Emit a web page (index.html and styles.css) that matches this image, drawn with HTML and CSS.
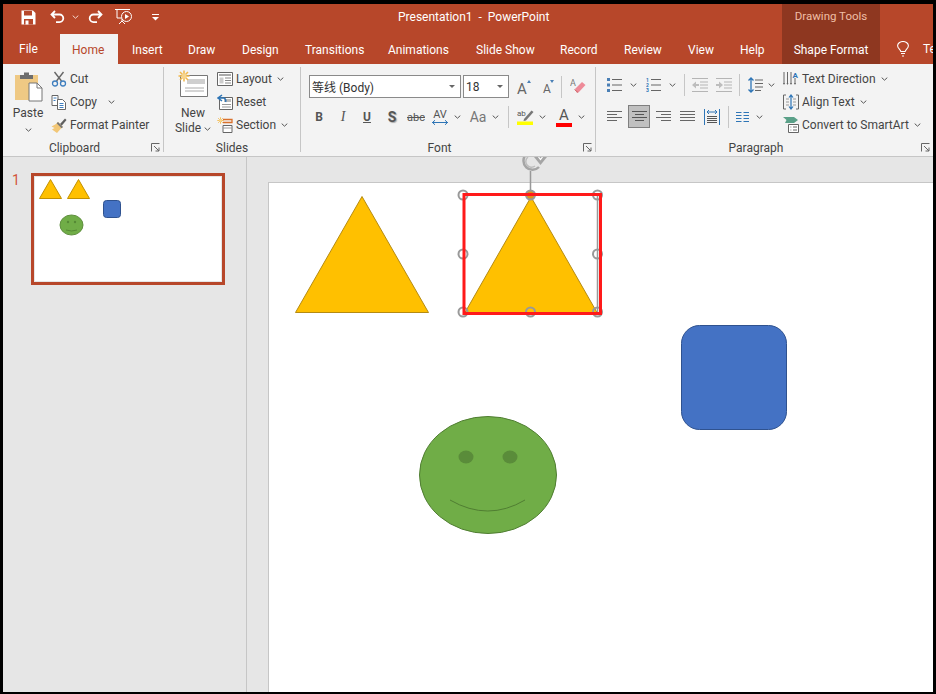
FILE: index.html
```html
<!DOCTYPE html>
<html lang="en">
<head>
  <meta charset="UTF-8">
  <title>Presentation1 - PowerPoint</title>
  <link rel="stylesheet" href="styles.css">
</head>
<body>
  <svg class="defs" aria-hidden="true">
    <symbol id="chev" viewBox="0 0 7 4"><path d="M.7.6 3.5 3.2 6.3.6" fill="none" stroke="#555" stroke-width="1"/></symbol>
    <symbol id="chev-light" viewBox="0 0 7 4"><path d="M.7.6 3.5 3.2 6.3.6" fill="none" stroke="#f5d9cf" stroke-width="1"/></symbol>
    <symbol id="launch" viewBox="0 0 9 9"><path d="M.5 8.5V.5h8M3 3l5 5M8 4.500V8H4.500" fill="none" stroke="#666" stroke-width="1"/></symbol>
    <symbol id="sparkle" viewBox="0 0 12 12"><path d="M6 .5v11M.5 6h11M2 2l8 8M10 2l-8 8" stroke="#f2b84b" stroke-width="1.500"/><circle cx="6" cy="6" r="2.500" fill="#f7d58c"/></symbol>
  </svg>

  <div class="app">
    <header class="head">
      <div class="titlebar">
        <div class="qat">
          <svg class="qat-save" width="15" height="15" viewBox="0 0 15 15"><path d="M.5.500h11.500l2.500 2.500v11.500H.5z" fill="#fff"/><path d="M3 1h8v4.500H3z" fill="#b7472a"/><path d="M3 9h9v5.500H3z" fill="#b7472a"/><path d="M4.500 10.500h3v4h-3z" fill="#fff"/></svg>
          <svg class="qat-undo" width="15" height="14" viewBox="0 0 15 14"><path d="M5 1 1.500 4.500 5 8M2 4.500h7.500a3.800 3.800 0 0 1 0 7.600H6" fill="none" stroke="#fff" stroke-width="1.800"/></svg>
          <svg class="chev qat-chev1"><use href="#chev-light"/></svg>
          <svg class="qat-redo" width="15" height="14" viewBox="0 0 15 14"><path d="M10 1l3.500 3.500L10 8M13 4.500H5.500a3.800 3.800 0 0 0 0 7.600H9" fill="none" stroke="#fff" stroke-width="1.800"/></svg>
          <svg class="qat-show" width="18" height="18" viewBox="0 0 18 18"><path d="M0 1.500h15M2 1.500v8.500h4M7 10v3M4 16l3-3 3 3" fill="none" stroke="#fff"/><circle cx="11.500" cy="8.500" r="5" fill="#b7472a" stroke="#fff"/><path d="M10 6l4 2.500-4 2.500z" fill="#fff"/></svg>
          <svg class="qat-more" width="7" height="7" viewBox="0 0 7 7"><path d="M0 .5h7" stroke="#fff"/><path d="M0 3h7L3.500 6.500z" fill="#fff"/></svg>
        </div>
        <span class="doc-title">Presentation1&nbsp; - &nbsp;PowerPoint</span>
      </div>
      <div class="context-title">Drawing Tools</div>
      <div class="titlebar-end"></div>
      <nav class="tabs">
        <span class="tab tab-file">File</span>
        <span class="tab tab-active">Home</span>
        <span class="tab">Insert</span>
        <span class="tab">Draw</span>
        <span class="tab">Design</span>
        <span class="tab">Transitions</span>
        <span class="tab">Animations</span>
        <span class="tab">Slide Show</span>
        <span class="tab">Record</span>
        <span class="tab">Review</span>
        <span class="tab">View</span>
        <span class="tab">Help</span>
      </nav>
      <div class="context-tab">Shape Format</div>
      <div class="tell">
        <svg width="12" height="16" viewBox="0 0 12 16"><path d="M3.800 10.500C3.500 8.500 .6 7.500.6 4.800a5.400 4.300 0 0 1 10.800 0c0 2.700-2.900 3.700-3.200 5.700zM4 12.500h4M5 15h2" fill="none" stroke="#fff" stroke-width="1.100"/></svg>
        <span>Te</span>
      </div>
    </header>

    <section class="ribbon">
      <div class="group group-clipboard">
        <div class="group-body">
          <div class="big-btn paste-btn">
            <svg width="29" height="30" viewBox="0 0 29 30"><path d="M1 3h23v25H1z" fill="#efc984"/><path d="M6 3h4V.5h5V3h4v4H6z" fill="#6d6d6d"/><path d="M15 11h8l5 5v13H15z" fill="#fff" stroke="#777"/><path d="M23 11v5h5" fill="none" stroke="#777"/></svg>
            <span class="big-label">Paste</span>
            <svg class="chev"><use href="#chev"/></svg>
          </div>
          <div class="small-col">
            <div class="small-btn">
              <svg class="ico" viewBox="0 0 16 16"><path d="M3.500 1l7 9M12.500 1l-7 9" stroke="#666" stroke-width="1.400"/><circle cx="4" cy="12.500" r="2.500" fill="none" stroke="#3f7fbf" stroke-width="1.300"/><circle cx="12" cy="12.500" r="2.500" fill="none" stroke="#3f7fbf" stroke-width="1.300"/></svg>
              <span>Cut</span>
            </div>
            <div class="small-btn">
              <svg class="ico" viewBox="0 0 16 16"><path d="M1 1.500h6v10H1z" fill="#fff" stroke="#666"/><path d="M6.500 5.500h5l3 3v7h-8z" fill="#fff" stroke="#666"/><path d="M2.500 4h3M2.500 6.500h2M8.500 9.500h4M8.500 11.500h4M8.500 13.500h4" stroke="#3f7fbf"/></svg>
              <span>Copy</span>
              <svg class="chev copy-chev"><use href="#chev"/></svg>
            </div>
            <div class="small-btn">
              <svg class="ico" viewBox="0 0 16 16"><path d="M9 7l5-5.500 1.500 1.500L10.500 9z" fill="#5f5f5f"/><path d="M7 5l5 5-2 1.500L6 16 1 12.500 3.500 11 .5 9.500 5 7z" fill="#f2c777"/><path d="M7 5l5 5-1.500 1.200L5.600 6.200z" fill="#777"/></svg>
              <span>Format Painter</span>
            </div>
          </div>
        </div>
        <div class="group-label">Clipboard</div>
        <svg class="launcher"><use href="#launch"/></svg>
      </div>

      <div class="group group-slides">
        <div class="group-body">
          <div class="big-btn new-slide-btn">
            <svg width="30" height="28" viewBox="0 0 30 28"><path d="M2.500 5.500h27v21h-27z" fill="#fff" stroke="#777"/><path d="M9 9h18v5H9z" fill="#cfcfcf"/><path d="M7 18h19M7 21h19" stroke="#aaa"/><use href="#sparkle" width="12" height="12" x="0" y="0"/></svg>
            <span class="big-label new-label">New</span>
            <span class="big-label">Slide <svg class="chev"><use href="#chev"/></svg></span>
          </div>
          <div class="small-col">
            <div class="small-btn">
              <svg class="ico" viewBox="0 0 16 16"><path d="M.5 1.500h15v13H.5z" fill="#fff" stroke="#666"/><path d="M2 3h12v2H2z" fill="#aaa"/><path d="M2.500 6.500h4v6h-4z" fill="#ccc"/><path d="M8 7h6M8 9.500h6M8 12h6" stroke="#888"/></svg>
              <span>Layout</span>
              <svg class="chev"><use href="#chev"/></svg>
            </div>
            <div class="small-btn">
              <svg class="ico" viewBox="0 0 16 16"><path d="M2.500 3.500h13v12h-13z" fill="#fff" stroke="#666"/><path d="M7 5h7v3H7z" fill="#bbb"/><path d="M5 10.500h9M5 13h9" stroke="#999"/><path d="M5 1 1 4l4 3M1.500 4H7a3 3 0 0 1 1.500 4" fill="none" stroke="#2e75b6" stroke-width="1.500"/></svg>
              <span>Reset</span>
            </div>
            <div class="small-btn">
              <svg class="ico" viewBox="0 0 16 16"><use href="#sparkle" width="7" height="7" x="0" y="0"/><path d="M6 2.500h9v3H6" fill="none" stroke="#d9702b" stroke-width="1.300"/><path d="M6 8.500h9v7H6z" fill="#fff" stroke="#666"/><path d="M6 11h9" stroke="#999"/></svg>
              <span>Section</span>
              <svg class="chev"><use href="#chev"/></svg>
            </div>
          </div>
        </div>
        <div class="group-label group-label-full">Slides</div>
      </div>

      <div class="group group-font">
        <div class="group-body font-body">
          <div class="font-row font-row-top">
            <div class="combo combo-font"><span>等线 (Body)</span><i class="combo-arrow"></i></div>
            <div class="combo combo-size"><span>18</span><i class="combo-arrow"></i></div>
            <div class="grow-btn grow-up"><span class="glyph-a glyph-a-big">A</span><i class="tri tri-up"></i></div>
            <div class="grow-btn grow-down"><span class="glyph-a">A</span><i class="tri tri-down"></i></div>
            <i class="sep sep-erase"></i>
            <svg class="eraser" width="16" height="17" viewBox="0 0 16 17"><text x="0" y="8" font-size="9" fill="#777" font-family="Roboto">A</text><path d="M5 11l7-7 3.500 3-7 7.500H6.500z" fill="#ee8a98"/><path d="M4.500 11.500l3.500 3" stroke="#c66"/></svg>
          </div>
          <div class="font-row font-row-bottom">
            <span class="fbtn fb-b">B</span>
            <span class="fbtn fb-i">I</span>
            <span class="fbtn fb-u">U</span>
            <span class="fbtn fb-s">S</span>
            <span class="fbtn fb-abc">abc</span>
            <span class="fbtn fb-av">AV<svg width="16" height="5" viewBox="0 0 16 5"><path d="M0 2.500h16M3 .2.500 2.500 3 4.800M13 .2l2.500 2.300L13 4.800" fill="none" stroke="#2e75b6"/></svg></span>
            <svg class="chev"><use href="#chev"/></svg>
            <span class="fbtn fb-aa">Aa</span>
            <svg class="chev"><use href="#chev"/></svg>
            <i class="sep sep-font"></i>
            <span class="fbtn fb-mark"><svg width="17" height="16" viewBox="0 0 17 16"><text x="0" y="7" font-size="8" fill="#555" font-family="Roboto">ab</text><path d="M7 10 14.500 1.500 16.500 3 9 11.500 6.500 12z" fill="#777"/><path d="M0 12.500h16V16H0z" fill="#ff0"/></svg></span>
            <svg class="chev"><use href="#chev"/></svg>
            <span class="fbtn fb-color">A<i class="color-bar"></i></span>
            <svg class="chev"><use href="#chev"/></svg>
          </div>
        </div>
        <div class="group-label">Font</div>
        <svg class="launcher"><use href="#launch"/></svg>
      </div>

      <div class="group group-para">
        <div class="group-body para-body">
          <div class="para-grid">
            <div class="para-row">
              <svg class="pi pi-list" viewBox="0 0 16 14"><path d="M0 0h3v3H0zM0 5.500h3v3H0zM0 11h3v3H0z" fill="#4a7fb5"/><path d="M5 1.500h10M5 7h10M5 12.500h10" stroke="#666" stroke-width="1.200"/></svg>
              <svg class="chev pc-1"><use href="#chev"/></svg>
              <svg class="pi pi-num" viewBox="0 0 16 14"><text x="0" y="4" font-size="5" font-weight="700" fill="#2e75b6" font-family="Roboto">1</text><text x="0" y="9" font-size="5" font-weight="700" fill="#2e75b6" font-family="Roboto">2</text><text x="0" y="14" font-size="5" font-weight="700" fill="#2e75b6" font-family="Roboto">3</text><path d="M5 1.500h10M5 7h10M5 12.500h10" stroke="#666" stroke-width="1.200"/></svg>
              <svg class="chev pc-2"><use href="#chev"/></svg>
              <i class="sep sep-p1"></i>
              <svg class="pi pi-out" viewBox="0 0 16 14"><path d="M0 .5h16M8 4h8M8 7h8M8 10h8M0 13.500h16" stroke="#b5b5b5"/><path d="M0 7l4-3.500V6h3v2H4v2.500z" fill="#bdbdbd"/></svg>
              <svg class="pi pi-in" viewBox="0 0 16 14"><path d="M0 .5h16M8 4h8M8 7h8M8 10h8M0 13.500h16" stroke="#b5b5b5"/><path d="M7 7 3 3.500V6H0v2h3v2.500z" fill="#bdbdbd"/></svg>
              <i class="sep sep-p2"></i>
              <svg class="pi pi-space" viewBox="0 0 16 16"><path d="M3 1v14M.5 3.500 3 1l2.500 2.500M.5 12.500 3 15l2.500-2.500" fill="none" stroke="#2e75b6" stroke-width="1.300"/><path d="M7 3h8M7 6.500h8M7 10h8M7 13.500h6" stroke="#666" stroke-width="1.100"/></svg>
              <svg class="chev pc-3"><use href="#chev"/></svg>
            </div>
            <div class="para-row para-row-bottom">
              <svg class="pi pi-left" viewBox="0 0 15 11"><path d="M0 .5h15M0 3.500h10M0 6.500h15M0 9.500h10" stroke="#666"/></svg>
              <span class="align-on"><svg class="pi" viewBox="0 0 15 11"><path d="M0 .5h15M3 3.500h9M0 6.500h15M3 9.500h9" stroke="#555"/></svg></span>
              <svg class="pi pi-right" viewBox="0 0 15 11"><path d="M0 .5h15M5 3.500h10M0 6.500h15M5 9.500h10" stroke="#666"/></svg>
              <svg class="pi pi-just" viewBox="0 0 15 11"><path d="M0 .5h15M0 3.500h15M0 6.500h15M0 9.500h15" stroke="#666"/></svg>
              <svg class="pi pi-dist" viewBox="0 0 16 16"><path d="M.5 0v16M15.500 0v16M3 3h10M5 1l-2 2 2 2M11 1l2 2-2 2" fill="none" stroke="#2e75b6"/><path d="M3 7.500h10M3 9.500h10M3 11.500h10M3 13.500h10" stroke="#555"/></svg>
              <i class="sep sep-p3"></i>
              <svg class="pi pi-cols" viewBox="0 0 13 10"><path d="M0 .5h5.500M7.500.5H13M0 3.500h5.500M7.500 3.500H13M0 6.500h5.500M7.500 6.500H13M0 9.500h5.500M7.500 9.500H13" stroke="#2e75b6"/></svg>
              <svg class="chev pc-4"><use href="#chev"/></svg>
            </div>
          </div>
          <div class="small-col para-col">
            <div class="small-btn">
              <svg class="ico" viewBox="0 0 16 16"><path d="M1 1v12M4.500 1v12M8 1v12M12 7v6" stroke="#666"/><path d="M0 12l1 2 1-2zM3.500 12l1 2 1-2zM7 12l1 2 1-2zM11 12l1 2 1-2z" fill="#666"/><text x="9.500" y="6.500" font-size="8" font-weight="700" fill="#2e75b6" font-family="Roboto">A</text></svg>
              <span>Text Direction</span>
              <svg class="chev"><use href="#chev"/></svg>
            </div>
            <div class="small-btn">
              <svg class="ico" viewBox="0 0 16 16"><path d="M3 1H.5v14H3M13 1h2.500v14H13" fill="none" stroke="#666"/><path d="M8 1v14M6 3.500 8 1l2 2.500M6 12.500 8 15l2-2.500" fill="none" stroke="#2e75b6" stroke-width="1.200"/><path d="M3 5h3M10 5h3M3 8h3M10 8h3M3 11h3M10 11h3" stroke="#999"/></svg>
              <span>Align Text</span>
              <svg class="chev"><use href="#chev"/></svg>
            </div>
            <div class="small-btn">
              <svg class="ico" viewBox="0 0 16 16"><path d="M0 0h11l4 3-4 3H2l1.500-3z" fill="#5aa088"/><path d="M5.500 7.500h10v8h-10z" fill="#fff" stroke="#666"/><path d="M7.500 10h.8M7.500 13h.8M10 10h4M10 13h4" stroke="#666"/></svg>
              <span>Convert to SmartArt</span>
              <svg class="chev"><use href="#chev"/></svg>
            </div>
          </div>
        </div>
        <div class="group-label">Paragraph</div>
        <svg class="launcher"><use href="#launch"/></svg>
      </div>
    </section>

    <main class="workspace">
      <aside class="thumbs">
        <span class="thumb-num">1</span>
        <div class="thumb">
          <svg width="188" height="106" viewBox="34 176 188 106">
            <path d="M50.500 179.500 61.500 198.500H39.500zM78.500 179.500 89.500 198.500H67.500z" fill="#ffc000" stroke="#c39100"/>
            <rect x="103.500" y="200.500" width="17" height="17" rx="3" fill="#4472c4" stroke="#2f528f"/>
            <ellipse cx="71.500" cy="225" rx="11.500" ry="10" fill="#70ad47" stroke="#5f8f3e"/>
            <circle cx="68" cy="222" r="1.200" fill="#568a36"/>
            <circle cx="75" cy="222" r="1.200" fill="#568a36"/>
            <path d="M66 230q5.500 2 11 0" fill="none" stroke="#4e7f30" stroke-width=".8"/>
          </svg>
        </div>
      </aside>
      <div class="editor">
        <div class="slide"></div>
        <svg class="canvas" width="686" height="535" viewBox="247 157 686 535">
          <path d="M362 196.500 428.500 312.500H295.500z" fill="#ffc000" stroke="#b58b12"/>
          <path d="M531 197 597 312.500H465z" fill="#ffc000" stroke="#b58b12"/>
          <rect x="681.500" y="325.500" width="105" height="104" rx="18" fill="#4472c4" stroke="#2f528f"/>
          <ellipse cx="488" cy="475" rx="68.500" ry="58.500" fill="#70ad47" stroke="#507e32"/>
          <ellipse cx="466" cy="457" rx="7.500" ry="6.500" fill="#5a8c3a"/>
          <ellipse cx="510" cy="457" rx="7.500" ry="6.500" fill="#5a8c3a"/>
          <path d="M450 500Q488 522 525 500" fill="none" stroke="#507e32"/>
          <g class="sel-frame">
            <path d="M597.500 195V312M530.500 171V191"/>
            <circle cx="463" cy="195" r="4.500"/>
            <circle cx="530.500" cy="195" r="4.500" class="sel-top"/>
            <circle cx="597.500" cy="195" r="4.500"/>
            <circle cx="463" cy="254" r="4.500"/>
            <circle cx="597.500" cy="254" r="4.500"/>
            <circle cx="463" cy="312" r="4.500"/>
            <circle cx="530.500" cy="312" r="4.500"/>
            <circle cx="597.500" cy="312" r="4.500"/>
            <path class="rot-ring" d="M526 154.500A9 9 0 1 0 539 167"/>
            <path class="rot-inner" d="M528 157A5.500 5.500 0 0 0 535 166"/>
            <path class="rot-arrow" d="M534 157h13l-6.500 8z"/>
            <path class="rot-tip" d="M538.500 157l2 2.500 2-2.500"/>
          </g>
          <rect x="464" y="194.500" width="136.500" height="119" fill="none" stroke="#ff1a1a" stroke-width="3"/>
        </svg>
      </div>
    </main>
  </div>
</body>
</html>
```

FILE: styles.css
```css
* {
  box-sizing: border-box;
}
html, body {
  margin: 0;
  height: 100%;
  overflow: hidden;
}
body {
  background: #000;
  font-family: Roboto, "Noto Sans CJK SC", sans-serif;
  font-size: 12px;
  color: #444;
}
.defs {
  display: none;
}
.app {
  width: 930px;
  height: 688px;
  margin: 4px 0 0 3px;
  display: flex;
  flex-direction: column;
  overflow: hidden;
  background: #e6e6e6;
}
svg {
  display: block;
  flex: none;
}
.chev {
  width: 7px;
  height: 4px;
}

/* title bar + tabs */
.head {
  display: grid;
  grid-template-columns: 779px 98px 53px;
  grid-template-rows: 30px 30px;
  background: #b7472a;
  color: #fff;
}
.titlebar {
  display: flex;
  align-items: center;
  padding-bottom: 4px;
}
.qat {
  width: 395px;
  display: flex;
  align-items: center;
  padding-left: 18px;
}
.qat-undo {
  margin-left: 14px;
}
.qat-chev1 {
  margin-left: 7px;
}
.qat-redo {
  margin-left: 9px;
}
.qat-show {
  margin-left: 12px;
}
.qat-more {
  margin-left: 19px;
}
.doc-title {
  white-space: nowrap;
}
.context-title {
  background: #8e3720;
  color: #f0bfa6;
  text-align: center;
  font-size: 11.500px;
  line-height: 24px;
}
.tabs {
  display: grid;
  grid-template-columns: 57px 58px 56px 54px 63px 83px 88px 84px 64px 64px 52px 1fr;
}
.tab {
  padding-left: 14px;
  line-height: 32px;
  white-space: nowrap;
}
.tab-file {
  padding-left: 16px;
  line-height: 30px;
}
.tab-active {
  background: #f3f3f3;
  color: #b7472a;
  padding-left: 12px;
}
.context-tab {
  background: #8e3720;
  text-align: center;
  line-height: 32px;
  white-space: nowrap;
}
.tell {
  display: flex;
  align-items: center;
  gap: 14px;
  padding-left: 17px;
  overflow: hidden;
}

/* ribbon */
.ribbon {
  height: 93px;
  display: flex;
  background: #f3f3f3;
  border-bottom: 1px solid #c6c6c6;
  flex: none;
}
.group {
  position: relative;
  display: flex;
  flex-direction: column;
  margin: 3px 0 4px;
  border-right: 1px solid #c6c6c6;
}
.group-clipboard {
  width: 161px;
}
.group-slides {
  width: 137px;
}
.group-font {
  width: 295px;
}
.group-para {
  width: 337px;
  border-right: none;
}
.group-body {
  flex: 1;
  display: flex;
}
.group-label {
  height: 14px;
  line-height: 20px;
  text-align: center;
  padding-right: 17px;
}
.group-label-full {
  padding-right: 0;
}
.launcher {
  position: absolute;
  right: 3px;
  bottom: 0;
  width: 9px;
  height: 9px;
}
.big-btn {
  display: flex;
  flex-direction: column;
  align-items: center;
  white-space: nowrap;
}
.big-label {
  display: flex;
  align-items: center;
  gap: 3px;
  line-height: 15px;
}
.paste-btn {
  width: 30px;
  margin-left: 10px;
  padding-top: 5px;
}
.paste-btn .big-label {
  margin-top: 4px;
}
.paste-btn .chev {
  margin-top: 7px;
}
.new-slide-btn {
  width: 38px;
  margin-left: 10px;
  padding-top: 3px;
}
.new-label {
  margin-top: 8px;
}
.small-col {
  display: flex;
  flex-direction: column;
  margin-left: 8px;
}
.group-slides .small-col {
  margin-left: 5px;
}
.small-btn {
  height: 23px;
  display: flex;
  align-items: center;
  gap: 3px;
  white-space: nowrap;
}
.small-btn .chev {
  margin-left: 2px;
}
.small-btn .copy-chev {
  margin-left: 8px;
}
.ico {
  width: 16px;
  height: 16px;
}

/* font group */
.font-body {
  flex-direction: column;
  padding-left: 8px;
}
.font-row {
  display: flex;
  align-items: center;
}
.font-row-top {
  height: 23px;
  margin-top: 8px;
}
.font-row-bottom {
  height: 24px;
  margin-top: 7px;
}
.combo {
  height: 23px;
  background: #fff;
  border: 1px solid #8a8a8a;
  display: flex;
  align-items: center;
  justify-content: space-between;
  padding: 0 5px 0 2px;
  color: #333;
}
.combo-font {
  width: 152px;
}
.combo-size {
  width: 46px;
  margin-left: 2px;
}
.combo-arrow {
  width: 0;
  height: 0;
  border: 3px solid transparent;
  border-top: 3px solid #666;
  border-bottom: none;
}
.grow-btn {
  position: relative;
  width: 16px;
  height: 18px;
}
.grow-up {
  margin-left: 6px;
  padding-left: 2px;
}
.grow-down {
  margin-left: 9px;
  padding-left: 3px;
}
.glyph-a {
  display: block;
  font-size: 12px;
  line-height: 22px;
  color: #666;
}
.glyph-a-big {
  font-size: 15px;
}
.tri {
  position: absolute;
  top: 2px;
  width: 0;
  height: 0;
  border-left: 2.500px solid transparent;
  border-right: 2.500px solid transparent;
}
.tri-up {
  right: 0;
  border-bottom: 3px solid #4a7fb5;
}
.tri-down {
  right: 2px;
  border-top: 3px solid #4a7fb5;
}
.sep {
  display: block;
  flex: none;
  width: 1px;
  height: 22px;
  background: #c6c6c6;
}
.sep-erase {
  margin-left: 5px;
}
.eraser {
  margin-left: 8px;
}
.fbtn {
  display: flex;
  flex-direction: column;
  align-items: center;
  justify-content: center;
  flex: none;
  width: 24px;
  height: 24px;
  color: #555;
  line-height: 1;
}
.fb-b {
  font-weight: 700;
  margin-left: -2px;
}
.fb-i {
  font-style: italic;
  font-family: "Liberation Serif", serif;
  font-size: 14px;
}
.fb-u {
  font-weight: 700;
  text-decoration: underline;
}
.fb-s {
  font-weight: 700;
  font-size: 14px;
  margin-left: 1px;
  text-shadow: 1px 1px 1px #aaa;
}
.fb-abc {
  font-size: 11px;
  text-decoration: line-through;
}
.fb-av {
  font-size: 11px;
}
.font-row-bottom .chev {
  margin-left: 2px;
}
.fb-aa {
  font-size: 14px;
  color: #777;
  margin-left: 5px;
}
.sep-font {
  margin-left: 9px;
}
.fb-mark {
  margin-left: 4px;
}
.fb-color {
  margin-left: 6px;
  font-size: 15px;
}
.color-bar {
  display: block;
  width: 16px;
  height: 4px;
  background: #f00;
}

/* paragraph group */
.para-body {
  padding-left: 11px;
}
.para-grid {
  width: 176px;
}
.para-row {
  display: flex;
  align-items: center;
  height: 23px;
  margin-top: 6px;
}
.para-row-bottom {
  height: 23px;
  margin-top: 9px;
}
.pi {
  width: 16px;
  height: 14px;
}
.pi-left, .pi-right, .pi-just {
  width: 15px;
  height: 11px;
}
.pi-right {
  margin-left: 6px;
}
.pi-just {
  margin-left: 9px;
}
.pi-dist {
  height: 16px;
  margin-left: 9px;
}
.pi-cols {
  width: 13px;
  height: 10px;
  margin-left: 7px;
}
.pc-1 {
  margin-left: 7px;
}
.pi-num {
  margin-left: 9px;
}
.pc-2 {
  margin-left: 7px;
}
.sep-p1 {
  margin-left: 8px;
}
.pi-out {
  margin-left: 7px;
}
.pi-in {
  margin-left: 8px;
}
.sep-p2 {
  margin-left: 7px;
}
.pi-space {
  height: 16px;
  margin-left: 8px;
}
.pc-3 {
  margin-left: 4px;
}
.align-on {
  width: 22px;
  height: 23px;
  margin-left: 6px;
  background: #c0c0c0;
  border: 1px solid #7f7f7f;
  display: flex;
  align-items: center;
  justify-content: center;
}
.align-on .pi {
  width: 15px;
  height: 11px;
}
.sep-p3 {
  margin-left: 8px;
}
.pc-4 {
  margin-left: 7px;
}
.para-col {
  margin-left: 0;
}

/* workspace */
.workspace {
  flex: 1;
  display: flex;
  min-height: 0;
}
.thumbs {
  width: 244px;
  flex: none;
  border-right: 1px solid #c6c6c6;
  display: flex;
  align-items: flex-start;
  padding: 16px 0 0 9px;
}
.thumb-num {
  width: 19px;
  color: #d2553a;
  font-size: 14px;
  line-height: 14px;
}
.thumb {
  width: 194px;
  height: 112px;
  border: 3px solid #b7472a;
  background: #fff;
  box-shadow: inset 0 0 0 1px #e6e6e6;
}
.editor {
  position: relative;
  flex: 1;
  padding: 25px 0 0 21px;
  overflow: hidden;
}
.slide {
  height: 100%;
  background: #fff;
  border: 1px solid #c6c6c6;
  border-right: none;
  border-bottom: none;
}
.canvas {
  position: absolute;
  left: 0;
  top: 0;
}
.sel-frame {
  fill: none;
  stroke: #999;
  stroke-width: 2;
}
.sel-frame path:first-child {
  stroke-width: 1.500;
}
.sel-top {
  fill: #e2941b;
}
.sel-frame .rot-ring {
  stroke: #a5a5a5;
  stroke-width: 2.500;
}
.sel-frame .rot-inner {
  stroke: #bdbdbd;
  stroke-width: 1.500;
}
.sel-frame .rot-arrow {
  fill: #a5a5a5;
  stroke: none;
}
.sel-frame .rot-tip {
  stroke: #fff;
  stroke-width: 1.200;
}
```
